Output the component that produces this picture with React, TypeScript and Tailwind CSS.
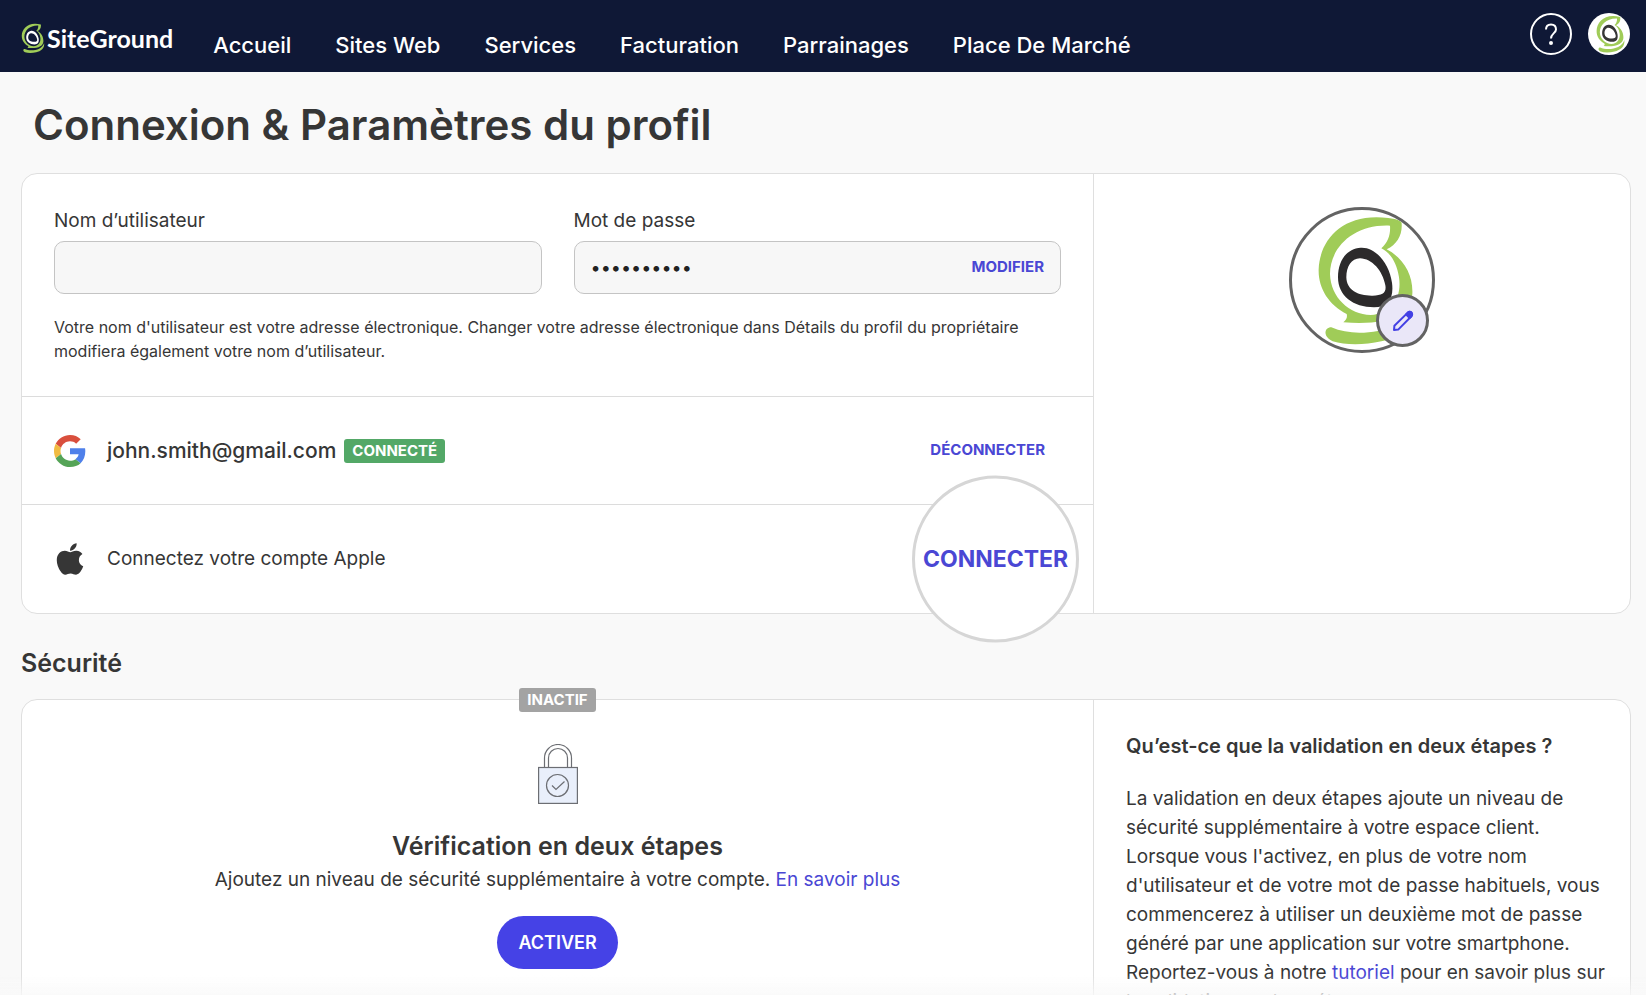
import { useState } from "react";
import { FaApple } from "react-icons/fa";

const NAV_ITEMS = ["Accueil", "Sites Web", "Services", "Facturation", "Parrainages", "Place De Marché"];

// The swirl is shared by the header logo and both avatars, only the ring color differs.
function Swirl({ ring, className, viewBox = "84 78 440 440" }: { ring: string; className: string; viewBox?: string }) {
    return (
        <svg viewBox={viewBox} className={className} aria-hidden="true">
            <path
                fill="#a0cc58"
                fillRule="evenodd"
                d="M422 120C428 158 412 190 378 206C428 232 458 282 455 340C450 400 390 436 248 425Q262 414 258 400C204 372 172 322 174 265C178 168 262 80 422 120ZM388 135C280 130 208 200 208 280C210 350 266 402 330 403C394 398 424 350 415 290C408 244 388 216 362 203C382 186 390 162 388 135Z"
            />
            <path
                fill="#a0cc58"
                d="M212 440C270 466 350 458 400 435C436 416 458 390 464 362C476 430 420 470 362 482C310 494 254 494 216 482C186 468 190 440 212 440Z"
            />
            <path
                fill={ring}
                fillRule="evenodd"
                d="M300 201C258 204 232 240 232 290C232 346 278 380 340 380C384 380 400 352 394 306C386 250 346 198 300 201ZM298 233C334 234 366 270 374 314C378 336 366 345 336 345C294 346 258 330 257 290C257 258 272 233 298 233Z"
            />
        </svg>
    );
}

function GoogleIcon() {
    return (
        <svg viewBox="0 0 48 48" className="size-8 shrink-0" aria-hidden="true">
            <path fill="#d94f3d" d="M24 9.5c3.54 0 6.71 1.22 9.21 3.6l6.85-6.85C35.9 2.38 30.47 0 24 0 14.62 0 6.51 5.38 2.56 13.22l7.98 6.19C12.43 13.72 17.74 9.5 24 9.5z" />
            <path fill="#4f80ea" d="M46.98 24.55c0-1.57-.15-3.09-.38-4.55H24v9.02h12.94c-.58 2.96-2.26 5.48-4.78 7.18l7.73 6c4.51-4.18 7.09-10.36 7.09-17.65z" />
            <path fill="#f1bb42" d="M10.53 28.59c-.48-1.45-.76-2.99-.76-4.59s.27-3.14.76-4.59l-7.98-6.19C.92 16.46 0 20.12 0 24c0 3.88.92 7.54 2.56 10.78l7.97-6.19z" />
            <path fill="#55a457" d="M24 48c6.48 0 11.93-2.13 15.89-5.81l-7.73-6c-2.15 1.45-4.92 2.3-8.16 2.3-6.26 0-11.57-4.22-13.47-9.91l-7.98 6.19C6.51 42.62 14.62 48 24 48z" />
        </svg>
    );
}

function PencilIcon() {
    return (
        <svg viewBox="0 0 24 24" className="size-6" fill="none" stroke="#4340e4" strokeWidth="2" strokeLinejoin="round" aria-hidden="true">
            <path d="M3 21L3.4 16.8L16.800 3.6Q18.8 2.2 20.400 3.6Q21.800 5.2 20.400 7.2L7.2 20.600Z" />
            <path fill="#4340e4" d="M15 5.4L16.800 3.6Q18.8 2.2 20.400 3.6Q21.800 5.2 20.400 7.2L18.600 9Z" />
        </svg>
    );
}

function LockIcon() {
    return (
        <svg viewBox="0 0 40 60" className="h-[60px] w-10" fill="none" stroke="#6c6e73" strokeWidth="1.2" aria-hidden="true">
            <path d="M6.5 23V14a13.500 13.500 0 0 1 27 0v9M10.500 23V14a9.500 9.500 0 0 1 19 0v9" />
            <rect x=".6" y="23.500" width="38.800" height="35.900" fill="#e9effb" />
            <circle cx="19.500" cy="41.500" r="11" />
            <path d="M14 41.500L18 45.500L26.500 37.500" />
        </svg>
    );
}

function App() {
    const [username, setUsername] = useState("");

    return (
        <div className="h-screen overflow-hidden bg-[#f9f9f9] font-['Inter',sans-serif] text-[#363636]">
            <header className="flex h-18 items-center bg-[#0f1836] pr-4 pl-[21px] text-white">
                <a href="#" className="flex h-8 items-center gap-0.5 pt-1" aria-label="SiteGround">
                    <Swirl ring="#ffffff" className="h-8 w-6" viewBox="164 96 312 400" />
                    <span className="font-['Lato',sans-serif] text-[25px] leading-8 font-bold">SiteGround</span>
                </a>
                <nav className="ml-10 flex gap-11 pt-[18px]">
                    {NAV_ITEMS.map((item) => (
                        <a key={item} href="#" className="text-[22px] leading-8 font-medium">
                            {item}
                        </a>
                    ))}
                </nav>
                <div className="ml-auto flex gap-4 pb-1">
                    <button type="button" aria-label="Aide" className="flex size-[42px] items-center justify-center rounded-full border-2 border-white">
                        <svg viewBox="0 0 16 24" className="h-6 w-4" fill="none" stroke="white" strokeWidth="2" aria-hidden="true">
                            <path d="M3 7.500C3 4 5 2.500 8 2.500S13 4.500 13 7.500C13 11 8 11.500 8 16.500" />
                            <circle cx="8" cy="21" r="1" />
                        </svg>
                    </button>
                    <button type="button" aria-label="Profil" className="size-[42px] overflow-hidden rounded-full bg-white">
                        <Swirl ring="#363636" className="size-[42px]" />
                    </button>
                </div>
            </header>

            <main className="pr-[15px] pl-[21px]">
                <h1 className="mt-7 mb-[23px] ml-3 text-[42px] leading-[50px] font-semibold">Connexion &amp; Paramètres du profil</h1>

                <section className="grid grid-cols-3 rounded-2xl border border-[#dfdfdf] bg-white">
                    <div className="col-span-2 divide-y divide-[#dcdcdc] border-r border-[#dfdfdf]">
                        <div className="px-8 py-[33px]">
                            <div className="grid grid-cols-2 gap-8">
                                <div>
                                    <label htmlFor="username" className="block text-[19px] leading-7">Nom d’utilisateur</label>
                                    <input
                                        id="username"
                                        type="text"
                                        value={username}
                                        onChange={(event) => setUsername(event.target.value)}
                                        className="mt-1.5 block h-[53px] w-full rounded-[10px] border border-[#c4c4c4] bg-[#f7f7f7] px-4"
                                    />
                                </div>
                                <div>
                                    <label htmlFor="password" className="block text-[19px] leading-7">Mot de passe</label>
                                    <div className="mt-1.5 flex h-[53px] items-center rounded-[10px] border border-[#c4c4c4] bg-[#f7f7f7] px-4">
                                        <input
                                            id="password"
                                            type="password"
                                            value="motdepasse"
                                            readOnly
                                            className="min-w-0 flex-1 bg-transparent text-[18px] text-[#222222] outline-none"
                                        />
                                        <button type="button" className="text-[15px] font-bold text-[#4a47d4]">MODIFIER</button>
                                    </div>
                                </div>
                            </div>
                            <p className="mt-[21px] text-[16px] leading-6">
                                Votre nom d'utilisateur est votre adresse électronique. Changer votre adresse électronique dans Détails du profil du propriétaire
                                modifiera également votre nom d’utilisateur.
                            </p>
                        </div>

                        <div className="flex h-[108px] items-center pr-12 pl-8">
                            <GoogleIcon />
                            <span className="ml-[21px] text-[21px] font-medium">john.smith@gmail.com</span>
                            <span className="ml-2 rounded-[3px] bg-[#53a867] px-2 text-[15px] leading-6 font-bold text-white">CONNECTÉ</span>
                            <button type="button" className="ml-auto text-[15px] font-bold text-[#4a47d4]">DÉCONNECTER</button>
                        </div>

                        <div className="relative flex h-[108px] items-center pl-8">
                            <FaApple className="-mx-0.5 size-9 shrink-0" />
                            <span className="ml-[21px] text-[19px]">Connectez votre compte Apple</span>
                            {/* Round highlight, larger than the row it sits in */}
                            <button
                                type="button"
                                className="absolute top-1/2 right-3.5 size-[167px] -translate-y-1/2 rounded-full border-[3px] border-[#d6d6d6] bg-white text-center text-[23px] font-bold text-[#4a47d4]"
                            >
                                CONNECTER
                            </button>
                        </div>
                    </div>

                    <div className="flex justify-center pt-[33px]">
                        <div className="relative size-[146px]">
                            <div className="size-[146px] overflow-hidden rounded-full border-[3px] border-[#636363] bg-white">
                                <Swirl ring="#2c2a2b" className="size-[140px]" viewBox="94 88 420 420" />
                            </div>
                            <button
                                type="button"
                                aria-label="Modifier la photo"
                                className="absolute right-1.5 bottom-1.5 flex size-[53px] items-center justify-center rounded-full border-[3px] border-[#636363] bg-[#eae7f8]"
                            >
                                <PencilIcon />
                            </button>
                        </div>
                    </div>
                </section>

                <h2 className="mt-[33px] mb-5 text-[25px] leading-8 font-semibold">Sécurité</h2>

                <section className="grid grid-cols-3 rounded-2xl border border-[#dfdfdf] bg-white">
                    <div className="relative col-span-2 flex flex-col items-center border-r border-[#dfdfdf] pt-11 pb-12">
                        <span className="absolute -top-3 rounded-[3px] bg-[#a3a3a3] px-2 text-[15px] leading-6 font-bold text-white">INACTIF</span>
                        <LockIcon />
                        <h3 className="mt-[26px] text-[25px] leading-8 font-semibold">Vérification en deux étapes</h3>
                        <p className="mt-1 text-[19px] leading-7">
                            Ajoutez un niveau de sécurité supplémentaire à votre compte. <a href="#" className="text-[#4a47d4]">En savoir plus</a>
                        </p>
                        <button type="button" className="mt-[22px] h-[53px] rounded-full bg-[#4542e6] px-[21px] text-[18px] font-semibold text-white">ACTIVER</button>
                    </div>

                    <div className="py-8 pr-5 pl-8">
                        <h3 className="text-[20px] leading-7 font-semibold">Qu’est-ce que la validation en deux étapes ?</h3>
                        <p className="mt-6 text-[19px] leading-[29px]">
                            La validation en deux étapes ajoute un niveau de sécurité supplémentaire à votre espace client. Lorsque vous l'activez, en plus de
                            votre nom d'utilisateur et de votre mot de passe habituels, vous commencerez à utiliser un deuxième mot de passe généré par une
                            application sur votre smartphone. Reportez-vous à notre <a href="#" className="text-[#4a47d4]">tutoriel</a> pour en savoir plus sur
                            la validation en deux étapes.
                        </p>
                    </div>
                </section>
            </main>

            <div className="pointer-events-none fixed inset-x-0 bottom-0 h-5 bg-linear-to-b from-transparent to-[#f9f9f9]/80" />
        </div>
    );
}

export default App;
